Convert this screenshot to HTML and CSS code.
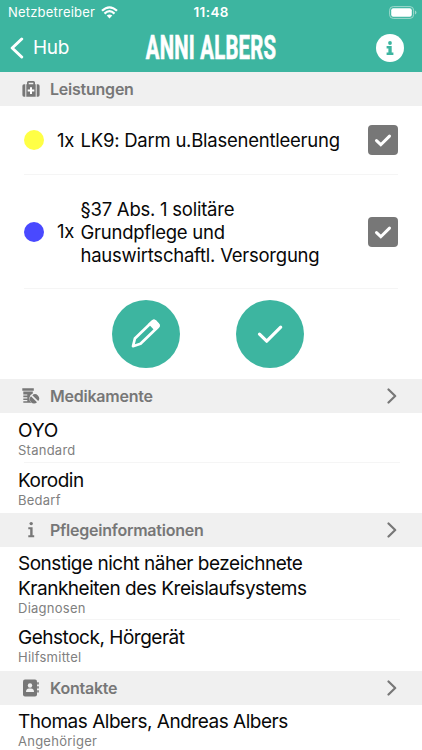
FILE: index.html
```html
<!DOCTYPE html>
<html lang="de">
<head>
<meta charset="utf-8">
<title>Anni Albers</title>
<link rel="stylesheet" href="styles.css">
</head>
<body>
<header class="top">
  <div class="status">
    <div class="carrier"><span>Netzbetreiber</span>
      <svg width="17" height="13" viewBox="0 0 17 13" fill="none" stroke="#fff" stroke-width="2.2"><path d="M1 4.8Q8.5-2.2 16 4.8M3.5 7.6Q8.5 2.8 13.5 7.6"/><path d="M5.7 9.6Q8.5 7.3 11.3 9.6L8.5 12.4Z" fill="#fff" stroke="none"/></svg>
    </div>
    <span class="clock">11:48</span>
    <svg class="battery" width="28" height="13" viewBox="0 0 28 13"><rect x=".6" y=".6" width="24" height="11.8" rx="3.6" fill="none" stroke="#9fd9cd"/><rect x="2.2" y="2.2" width="20.6" height="8.6" rx="2" fill="#fff"/><path d="M26 4.5q1.4.5 1.4 2t-1.4 2z" fill="#9fd9cd"/></svg>
  </div>
  <nav class="nav">
    <div class="back"><svg width="14" height="22" viewBox="0 0 14 22" fill="none" stroke="#fff" stroke-width="3" stroke-linecap="round" stroke-linejoin="round"><path d="M11.7 2 2.2 11l9.5 9"/></svg><span>Hub</span></div>
    <h1><span>ANNI ALBERS</span></h1>
    <svg class="info" width="28" height="28" viewBox="0 0 28 28"><circle cx="14" cy="14" r="14" fill="#fff"/><g fill="#3db5a0"><circle cx="14" cy="9" r="1.9"/><path d="M10.6 12.1h5.1v6.4h1.7v2.4h-6.8v-2.4h1.8v-4h-1.8z"/></g></svg>
  </nav>
</header>
<main>
  <h2 class="head"><svg class="ico" width="18" height="18" viewBox="0 0 18 18"><path fill="#777" d="M2 4.2h1.3v12.6H2A1.7 1.7 0 0 1 .4 15V6A1.8 1.8 0 0 1 2 4.2zM14.700 4.200h1.300A1.800 1.800 0 0 1 17.600 6v9a1.700 1.700 0 0 1-1.600 1.800h-1.300zM4.300 4.200h.7V2.500A1.600 1.600 0 0 1 6.600.9h4.800A1.600 1.600 0 0 1 13 2.500v1.700h.7v12.600H4.300zM6.700 2.700v1.500h4.600V2.700z"/><path fill="#fff" d="M8 7.300h2v2.300h2.300v2H10v2.300H8v-2.300H5.700v-2H8z"/></svg><span>Leistungen</span></h2>
  <section class="task one">
    <i class="dot yellow"></i><span class="qty">1x</span><p>LK9: Darm u.Blasenentleerung</p>
    <svg class="box" width="30" height="30" viewBox="0 0 30 30"><rect width="30" height="30" rx="4" fill="#777"/><path d="m8.500 15.600 4.300 4.100 8.700-8.600" fill="none" stroke="#fff" stroke-width="3" stroke-linecap="round"/></svg>
  </section>
  <section class="task two">
    <i class="dot blue"></i><span class="qty">1x</span><p>§37 Abs. 1 solitäre<br>Grundpflege und<br>hauswirtschaftl. Versorgung</p>
    <svg class="box" width="30" height="30" viewBox="0 0 30 30"><rect width="30" height="30" rx="4" fill="#777"/><path d="m8.500 15.600 4.300 4.100 8.700-8.600" fill="none" stroke="#fff" stroke-width="3" stroke-linecap="round"/></svg>
  </section>
  <div class="actions">
    <svg width="68" height="68" viewBox="0 0 68 68"><circle cx="34" cy="34" r="34" fill="#3db5a0"/><path d="M21 46.200 22.900 38.500 40.500 21.500q1.500-1.300 3 .2l2.200 2.300q1.500 1.600.2 3L28.500 43.800Z" fill="none" stroke="#fff" stroke-width="2.700" stroke-linejoin="round"/><path d="m36.300 23.800 4.200-3.800q1.600-1.100 3.100.3l3.400 3.400q1.500 1.600.3 3.200l-4.200 4.200z" fill="#fff"/></svg>
    <svg width="68" height="68" viewBox="0 0 68 68"><circle cx="34" cy="34" r="34" fill="#3db5a0"/><path d="m23.500 34.200 7.200 7 14-14" fill="none" stroke="#fff" stroke-width="3.200" stroke-linecap="round" stroke-linejoin="round"/></svg>
  </div>
  <h2 class="head"><svg class="ico" width="18" height="18" viewBox="0 0 18 18"><g fill="#777"><path d="M.3 1.300h11.500v2.400H.3zM1.300 4.500h9.500v2.100a5.300 5.300 0 0 0-1.300 9.200H1.300v-1.600h4v-1.100h-4v-1.700h4v-1.100h-4V8.600h4V7.500h-4z"/><path d="m9 9.300 6 5.900A4.200 4.200 0 0 1 9 9.300zM10.300 8.200a4.200 4.200 0 0 1 5.900 5.900z"/></g></svg><span>Medikamente</span><svg class="chev" width="10" height="16" viewBox="0 0 10 16"><path d="m1.500 1.500 6.700 6.500-6.700 6.500"/></svg></h2>
  <section class="entry line h50"><p class="caps">OYO</p><small>Standard</small></section>
  <section class="entry h50"><p>Korodin</p><small>Bedarf</small></section>
  <h2 class="head"><svg class="ico" width="18" height="18" viewBox="0 0 18 18" fill="#777"><circle cx="9.200" cy="2.600" r="1.700"/><path d="M6.300 6.300h4.300v8h1.600v2H6.300v-2h1.900v-6H6.300z"/></svg><span>Pflegeinformationen</span><svg class="chev" width="10" height="16" viewBox="0 0 10 16"><path d="m1.500 1.500 6.700 6.500-6.700 6.500"/></svg></h2>
  <section class="entry line tight h73"><p>Sonstige nicht näher bezeichnete<br>Krankheiten des Kreislaufsystems</p><small>Diagnosen</small></section>
  <section class="entry h51"><p>Gehstock, Hörgerät</p><small>Hilfsmittel</small></section>
  <h2 class="head"><svg class="ico" width="18" height="18" viewBox="0 0 18 18"><rect x="1" y=".6" width="14" height="16.800" rx="2" fill="#777"/><path d="M16 3.200v12" stroke="#777" stroke-width="1.600" stroke-dasharray="2.400 1.600"/><circle cx="8" cy="6.500" r="2.200" fill="#f0f0f0"/><path d="M4 13q0-3.500 3-3.500h2q3 0 3 3.500z" fill="#f0f0f0"/></svg><span>Kontakte</span><svg class="chev" width="10" height="16" viewBox="0 0 10 16"><path d="m1.500 1.500 6.700 6.500-6.700 6.500"/></svg></h2>
  <section class="entry tight h51"><p>Thomas Albers, Andreas Albers</p><small>Angehöriger</small></section>
</main>
</body>
</html>
```
FILE: styles.css
```css
* { box-sizing: border-box; }
body { margin: 0; height: 750px; overflow: hidden; background: #fff; color: #080808; font-family: Inter, "Liberation Sans", sans-serif; }
h1, h2, p { margin: 0; font-weight: 400; }
svg { display: block; flex: none; }
.top { height: 72px; background: #3db5a0; color: #fff; }
.status { height: 24px; display: grid; grid-template-columns: 1fr 36px 1fr; align-items: center; padding: 0 5px 0 6px; font-size: 13px; }
.carrier { display: flex; align-items: center; gap: 6px; padding-left: 2px; letter-spacing: .2px; }
.clock { font-weight: 600; font-size: 13.500px; letter-spacing: .4px; }
.battery { justify-self: end; }
.nav { height: 48px; display: grid; grid-template-columns: 1fr 132px 1fr; align-items: center; padding: 0 18px 1px 18px; }
.back { display: flex; align-items: center; gap: 9px; margin-left: -8px; font-size: 19px; letter-spacing: -.3px; }
.nav h1 { height: 34px; display: flex; justify-content: center; font: 700 33px/34px Roboto, sans-serif; white-space: nowrap; }
.nav h1 span { transform: scaleX(.615); -webkit-text-stroke: .7px #fff; letter-spacing: .4px; }
.info { justify-self: end; }
.head { height: 34px; display: flex; align-items: center; gap: 10px; padding: 0 25px 0 22px; background: #f0f0f0; color: #777; font-size: 16px; font-weight: 600; letter-spacing: -.23px; }
.chev { margin-left: auto; fill: none; stroke: #777; stroke-width: 2.2; stroke-linecap: round; stroke-linejoin: round; }
.task { display: flex; align-items: center; margin: 0 24px; border-bottom: 1px solid #f5f5f5; font-size: 18.500px; line-height: 23px; letter-spacing: -.24px; white-space: nowrap; }
.one { height: 69px; }
.two { height: 114px; }
.two p { padding-top: 2px; }
.dot { width: 20px; height: 20px; border-radius: 50%; margin-right: 13px; }
.yellow { background: #ffff45; }
.blue { background: #4949ff; }
.qty { width: 23.500px; }
.box { margin-left: auto; margin-right: .4px; }
.actions { height: 90px; display: flex; justify-content: center; gap: 56px; padding-top: 11px; padding-right: 6px; }
.entry { position: relative; padding: 5px 18px 0; font-size: 19px; line-height: 25px; letter-spacing: -.48px; white-space: nowrap; }
.entry .caps { letter-spacing: -.2px; }
.entry small { display: block; font-size: 13px; line-height: 15px; letter-spacing: .25px; color: #808080; }
.tight { padding-top: 4px; }
.line::after { content: ""; position: absolute; left: 24px; right: 22px; bottom: 0; height: 1px; background: #f5f5f5; }
.h50 { height: 50px; }
.h73 { height: 73px; }
.h51 { height: 51px; }
```
